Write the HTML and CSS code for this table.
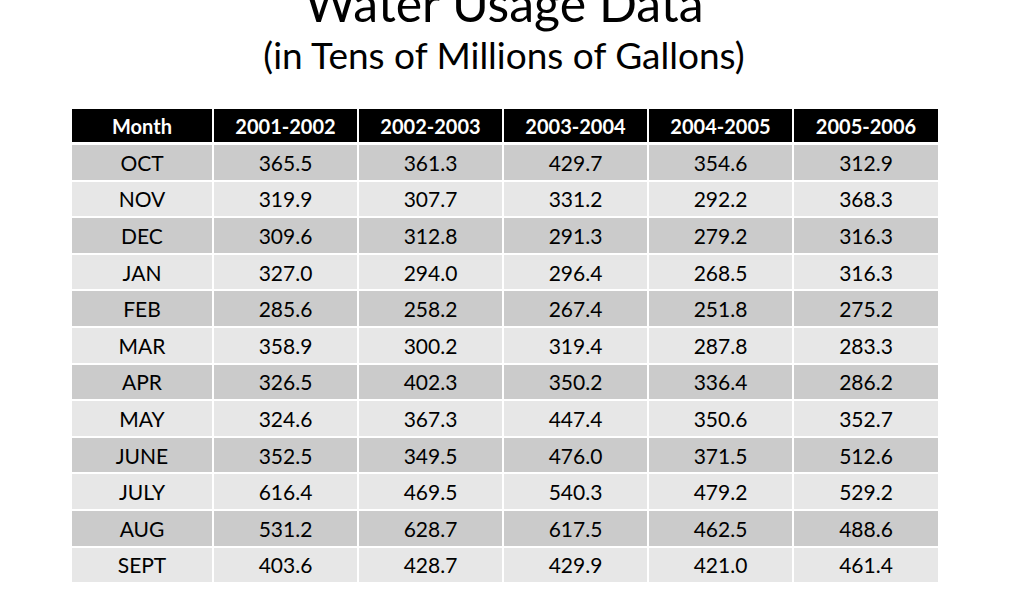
FILE: index.html
```html
<!DOCTYPE html>
<html lang="en">
<head>
<meta charset="utf-8">
<title>Water Usage Data</title>
<link rel="stylesheet" href="styles.css">
</head>
<body>
<header class="heading">
  <h1 class="title">Water Usage Data</h1>
  <p class="subtitle">(in Tens of Millions of Gallons)</p>
</header>
<table class="usage">
  <colgroup>
    <col class="c-month"><col class="c-year"><col class="c-year"><col class="c-year"><col class="c-year"><col class="c-year">
  </colgroup>
  <thead>
    <tr><th>Month</th><th>2001-2002</th><th>2002-2003</th><th>2003-2004</th><th>2004-2005</th><th>2005-2006</th></tr>
  </thead>
  <tbody>
    <tr class="dark"><td>OCT</td><td>365.5</td><td>361.3</td><td>429.7</td><td>354.6</td><td>312.9</td></tr>
    <tr class="light"><td>NOV</td><td>319.9</td><td>307.7</td><td>331.2</td><td>292.2</td><td>368.3</td></tr>
    <tr class="dark"><td>DEC</td><td>309.6</td><td>312.8</td><td>291.3</td><td>279.2</td><td>316.3</td></tr>
    <tr class="light"><td>JAN</td><td>327.0</td><td>294.0</td><td>296.4</td><td>268.5</td><td>316.3</td></tr>
    <tr class="dark"><td>FEB</td><td>285.6</td><td>258.2</td><td>267.4</td><td>251.8</td><td>275.2</td></tr>
    <tr class="light"><td>MAR</td><td>358.9</td><td>300.2</td><td>319.4</td><td>287.8</td><td>283.3</td></tr>
    <tr class="dark"><td>APR</td><td>326.5</td><td>402.3</td><td>350.2</td><td>336.4</td><td>286.2</td></tr>
    <tr class="light"><td>MAY</td><td>324.6</td><td>367.3</td><td>447.4</td><td>350.6</td><td>352.7</td></tr>
    <tr class="dark"><td>JUNE</td><td>352.5</td><td>349.5</td><td>476.0</td><td>371.5</td><td>512.6</td></tr>
    <tr class="light"><td>JULY</td><td>616.4</td><td>469.5</td><td>540.3</td><td>479.2</td><td>529.2</td></tr>
    <tr class="dark"><td>AUG</td><td>531.2</td><td>628.7</td><td>617.5</td><td>462.5</td><td>488.6</td></tr>
    <tr class="light"><td>SEPT</td><td>403.6</td><td>428.7</td><td>429.9</td><td>421.0</td><td>461.4</td></tr>
  </tbody>
</table>
</body>
</html>
```
FILE: styles.css
```css
html, body {
  margin: 0;
  padding: 0;
  background: #ffffff;
}
body {
  width: 1024px;
  height: 608px;
  overflow: hidden;
  font-family: Lato, "Open Sans", "Liberation Sans", sans-serif;
  color: #000;
}
.heading {
  text-align: center;
  margin-top: -27px;
  width: 1008px;
}
.title {
  margin: 0;
  font-weight: 400;
  font-size: 50px;
  line-height: 60px;
}
.subtitle {
  margin: 0;
  font-size: 37px;
  line-height: 44px;
}
.usage {
  margin-top: 32px;
  margin-left: 72px;
  width: 866px;
  table-layout: fixed;
  border-collapse: collapse;
  font-size: 21px;
  text-align: center;
}
.c-month { width: 141px; }
.c-year { width: 145px; }
.usage th {
  background: #000;
  color: #fff;
  font-weight: 700;
  font-size: 20px;
  height: 33px;
  padding: 0;
  border-left: 2px solid #fff;
  border-bottom: 3px solid #fff;
}
.usage td {
  height: 34.6px;
  padding: 0;
  border: 2px solid #fff;
  border-top: 0;
}
.usage tr > :first-child { border-left: 0; }
.usage tr > :last-child { border-right: 0; }
.usage tbody tr:last-child td { border-bottom: 0; }
.dark td { background: #cbcbcb; }
.light td { background: #e7e7e7; }
```
